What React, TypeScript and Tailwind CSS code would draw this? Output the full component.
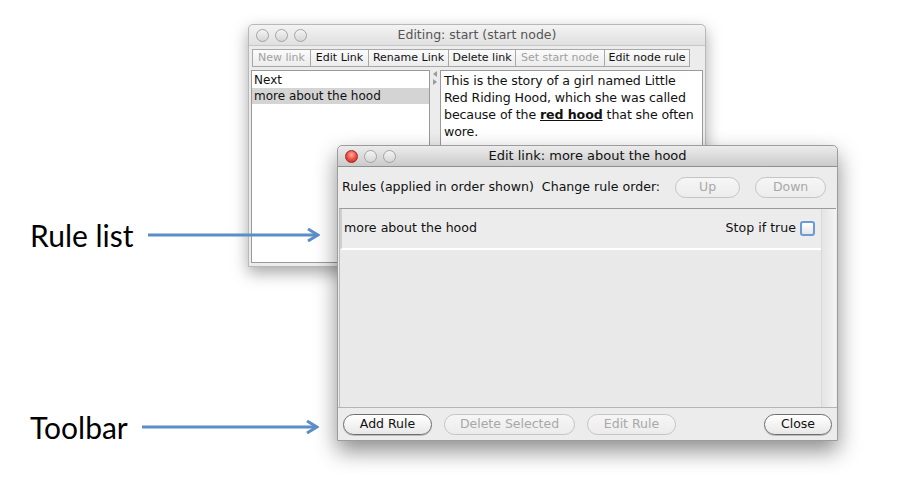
import React from "react";

const ui = { fontFamily: '"DejaVu Sans", "Liberation Sans", sans-serif' };
const label = { fontFamily: 'Lato, "Open Sans", sans-serif' };

function Light({ color }: { color: "red" | "gray" }) {
  return color === "red" ? (
    <div className="w-[13px] h-[13px] rounded-full border border-[#9b2a22] bg-[radial-gradient(circle_at_50%_35%,#ffb3a8_0%,#f2564a_45%,#c4231a_100%)]" />
  ) : (
    <div className="w-[13px] h-[13px] rounded-full border border-[#a3a3a3] bg-[linear-gradient(#f4f4f4,#d6d6d6)]" />
  );
}

function ToolBtn({ children, disabled, w }: { children: React.ReactNode; disabled?: boolean; w: string }) {
  return (
    <div
      className={`${w} h-[18px] flex items-center justify-center border border-[#a8a8a8] -ml-px first:ml-0 bg-[linear-gradient(#fbfbfb,#ececec)] text-[11px] ${disabled ? "text-[#a0a0a0]" : "text-[#111]"}`}
    >
      {children}
    </div>
  );
}

function PillBtn({ children, disabled, w }: { children: React.ReactNode; disabled?: boolean; w: string }) {
  return (
    <div
      className={`${w} h-[21px] shrink-0 whitespace-nowrap rounded-full flex items-center justify-center text-[12.5px] ${
        disabled
          ? "border border-[#c4c4c4] text-[#a8a8a8] bg-[linear-gradient(#f6f6f6,#ececec)]"
          : "border border-[#6e6e6e] text-[#111] bg-[linear-gradient(#ffffff,#e8e8e8)] shadow-[0_1px_0_#bdbdbd]"
      }`}
    >
      {children}
    </div>
  );
}

function Arrow({ width }: { width: number }) {
  return (
    <svg width={width} height="14" viewBox={`0 0 ${width} 14`}>
      <line x1="0" y1="7" x2={width - 3} y2="7" stroke="#5b8ec6" strokeWidth="3" />
      <polyline points={`${width - 12},1 ${width - 2},7 ${width - 12},13`} fill="none" stroke="#5b8ec6" strokeWidth="3" strokeLinejoin="miter" />
    </svg>
  );
}

export default function App() {
  return (
    <div className="relative w-[923px] h-[478px] bg-white overflow-hidden" style={ui}>
      {/* Back window */}
      <div className="absolute left-[248px] top-[24px] w-[458px] h-[243px] bg-[#ececec] border border-[#b8b8b8] rounded-t-[5px] shadow-[0_6px_16px_rgba(0,0,0,0.35)] flex flex-col">
        <div className="relative h-[21px] flex items-center px-[7px] rounded-t-[5px] bg-[linear-gradient(#f3f3f3,#e0e0e0)] border-b border-[#c6c6c6]">
          <div className="flex gap-[6px]">
            <Light color="gray" />
            <Light color="gray" />
            <Light color="gray" />
          </div>
          <div className="absolute inset-0 flex items-center justify-center text-[12.5px] text-[#555]">Editing: start (start node)</div>
        </div>
        <div className="flex px-[3px] pt-[3px] h-[24px]">
          <ToolBtn disabled w="w-[59px]">New link</ToolBtn>
          <ToolBtn w="w-[59px]">Edit Link</ToolBtn>
          <ToolBtn w="w-[81px]">Rename Link</ToolBtn>
          <ToolBtn w="w-[68px]">Delete link</ToolBtn>
          <ToolBtn disabled w="w-[90px]">Set start node</ToolBtn>
          <ToolBtn w="w-[86px]">Edit node rule</ToolBtn>
        </div>
        <div className="flex flex-1 px-[2px] pb-[3px]">
          <div className="w-[179px] bg-white border border-[#9a9a9a] pt-[1px] text-[12px] text-[#111] leading-[16px]">
            <div className="pl-[2px]">Next</div>
            <div className="pl-[2px] bg-[#d4d4d4]">more about the hood</div>
          </div>
          <div className="w-[10px] flex flex-col items-center pt-[1px] gap-[2px]">
            <div className="w-0 h-0 border-y-[3px] border-y-transparent border-r-[4px] border-r-[#9a9a9a]" />
            <div className="w-0 h-0 border-y-[3px] border-y-transparent border-l-[4px] border-l-[#9a9a9a]" />
          </div>
          <div className="flex-1 bg-white border border-[#9a9a9a] pl-[3px] pr-0 pt-[1px] text-[12.6px] leading-[17px] text-[#111] tracking-[-0.1px]">
            This is the story of a girl named Little Red Riding Hood, which she was called because of the{" "}
            <span className="font-bold underline">red hood</span> that she often wore.
          </div>
        </div>
      </div>

      {/* Front window */}
      <div className="absolute left-[337px] top-[145px] w-[501px] h-[296px] bg-[#ececec] border border-[#9c9c9c] rounded-t-[5px] shadow-[0_10px_22px_rgba(0,0,0,0.45)] flex flex-col">
        <div className="relative h-[21px] flex items-center px-[7px] rounded-t-[5px] bg-[linear-gradient(#ececec,#cbcbcb)] border-b border-[#8f8f8f]">
          <div className="flex gap-[6px]">
            <Light color="red" />
            <Light color="gray" />
            <Light color="gray" />
          </div>
          <div className="absolute inset-0 flex items-center justify-center text-[13px] text-[#111]">Edit link: more about the hood</div>
        </div>
        <div className="flex items-center h-[41px] pl-[4px] text-[12.6px] text-[#111] whitespace-nowrap">
          <span className="shrink-0">Rules (applied in order shown)</span>
          <span className="shrink-0 ml-[8px]">Change rule order:</span>
          <div className="shrink-0 ml-[15px]">
            <PillBtn disabled w="w-[65px]">Up</PillBtn>
          </div>
          <div className="shrink-0 ml-[15px]">
            <PillBtn disabled w="w-[71px]">Down</PillBtn>
          </div>
        </div>
        <div className="flex flex-1 mx-[1px] border-t border-[#9a9a9a] border-l border-l-[#bdbdbd]">
          <div className="flex-1 flex flex-col">
            <div className="h-[41px] flex items-center justify-between pl-[2px] pr-[6px] border-l-2 border-l-[#cfcfcf] border-b-2 border-b-white text-[12.6px] text-[#111]">
              <span>more about the hood</span>
              <span className="flex items-center gap-[4px]">
                Stop if true
                <span className="w-[15px] h-[15px] rounded-[3px] border-2 border-[#6b9ad4] bg-[linear-gradient(#ffffff,#e6e6e6)]" />
              </span>
            </div>
            <div className="flex-1 bg-[#e9e9e9]" />
          </div>
          <div className="w-[15px] bg-[linear-gradient(90deg,#e4e4e4,#f4f4f4)] border-l border-[#dadada]" />
        </div>
        <div className="h-[33px] flex items-center px-[5px] border-t border-[#b5b5b5] bg-[#ececec]">
          <PillBtn w="w-[89px]">Add Rule</PillBtn>
          <div className="ml-[12px]">
            <PillBtn disabled w="w-[131px]">Delete Selected</PillBtn>
          </div>
          <div className="ml-[12px]">
            <PillBtn disabled w="w-[89px]">Edit Rule</PillBtn>
          </div>
          <div className="ml-auto">
            <PillBtn w="w-[68px]">Close</PillBtn>
          </div>
        </div>
      </div>

      {/* Annotations */}
      <div className="absolute left-[30px] top-[220px] flex items-center gap-[14px]">
        <span className="text-[30px] leading-none text-black" style={label}>Rule list</span>
        <Arrow width={172} />
      </div>
      <div className="absolute left-[30px] top-[412px] flex items-center gap-[14px]">
        <span className="text-[30px] leading-none text-black" style={label}>Toolbar</span>
        <Arrow width={177} />
      </div>
    </div>
  );
}
